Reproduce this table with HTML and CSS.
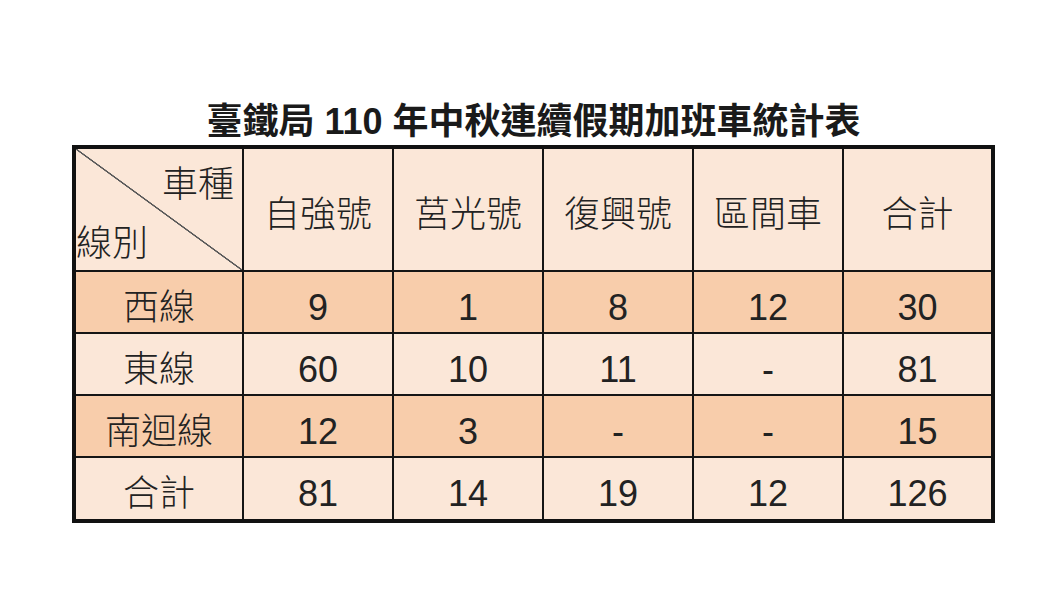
FILE: index.html
```html
<!DOCTYPE html>
<html lang="zh-Hant">
<head>
<meta charset="utf-8">
<title>臺鐵局 110 年中秋連續假期加班車統計表</title>
<link rel="stylesheet" href="styles.css">
</head>
<body>
<main class="sheet">
  <h1 class="title">臺鐵局 110 年中秋連續假期加班車統計表</h1>
  <table class="stats">
    <colgroup>
      <col class="c-line">
      <col class="c-type">
      <col class="c-type">
      <col class="c-type">
      <col class="c-type">
      <col class="c-total">
    </colgroup>
    <thead>
      <tr class="row-head">
        <th class="corner">
          <div class="corner-box">
            <span class="corner-top">車種</span>
            <span class="corner-bottom">線別</span>
          </div>
        </th>
        <th>自強號</th>
        <th>莒光號</th>
        <th>復興號</th>
        <th>區間車</th>
        <th class="last-col">合計</th>
      </tr>
    </thead>
    <tbody>
      <tr class="row-dark">
        <th>西線</th><td>9</td><td>1</td><td>8</td><td>12</td><td class="last-col">30</td>
      </tr>
      <tr class="row-light">
        <th>東線</th><td>60</td><td>10</td><td>11</td><td>-</td><td class="last-col">81</td>
      </tr>
      <tr class="row-dark">
        <th>南迴線</th><td>12</td><td>3</td><td>-</td><td>-</td><td class="last-col">15</td>
      </tr>
      <tr class="row-light row-last">
        <th>合計</th><td>81</td><td>14</td><td>19</td><td>12</td><td class="last-col">126</td>
      </tr>
    </tbody>
  </table>
</main>
</body>
</html>
```

FILE: styles.css
```css
html, body {
  margin: 0;
  padding: 0;
  background: #ffffff;
}

body {
  font-family: "Liberation Sans", "Noto Sans CJK TC", sans-serif;
  color: #1f1f1f;
}

.sheet {
  width: 923px;
  margin: 0 auto;
  padding: 100px 0 0 7px;
}

.title {
  margin: 0 0 1px;
  font-size: 36px;
  line-height: 44px;
  font-weight: 700;
  text-align: center;
  color: #1a1a1a;
  letter-spacing: 0;
}

.stats {
  width: 923px;
  table-layout: fixed;
  border-collapse: separate;
  border-spacing: 0;
  border: 4px solid #111;
  font-size: 36px;
  font-weight: 300;
}

.c-line { width: 168px; }
.c-type { width: 150px; }
.c-total { width: 147px; }

.stats th,
.stats td {
  box-sizing: border-box;
  border-right: 2px solid #151515;
  border-bottom: 2px solid #151515;
  padding: 11px 0 0;
  text-align: center;
  vertical-align: middle;
  font-weight: 300;
  line-height: 40px;
  color: #222;
}

.stats .last-col { border-right: none; }
.row-last th,
.row-last td { border-bottom: none; }

.row-head { height: 123px; background: #fbe7d8; }
.row-dark { height: 62px; background: #f8cdab; }
.row-light { height: 62px; background: #fbe7d8; }
.row-last { height: 61px; }

.stats .corner {
  padding: 0;
  background: linear-gradient(to top right,
      transparent calc(50% - 1px),
      #5a5a5a calc(50% - 0.5px),
      #5a5a5a calc(50% + 0.5px),
      transparent calc(50% + 1px));
}

.corner-box {
  height: 121px;
  box-sizing: border-box;
  padding: 16px 8px 6px 0;
  display: flex;
  flex-direction: column;
  justify-content: space-between;
}

.corner-top { align-self: flex-end; }
.corner-bottom { align-self: flex-start; }
```
